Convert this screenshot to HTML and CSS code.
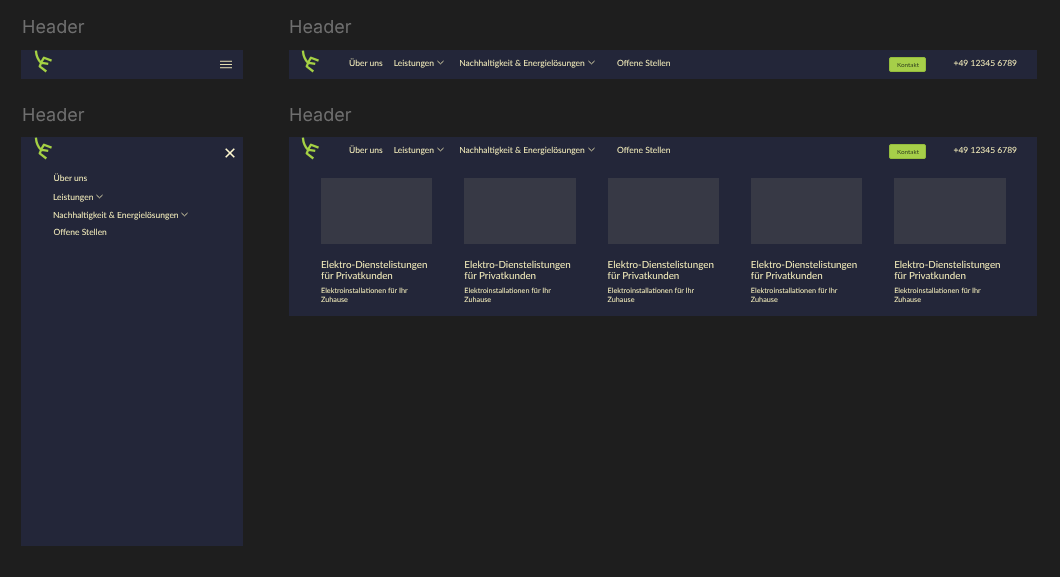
FILE: index.html
```html
<!DOCTYPE html>
<html lang="de">
<head>
    <meta charset="UTF-8">
    <title>Header</title>
    <meta name="viewport" content="width=device-width, initial-scale=1">
    <link rel="stylesheet" href="styles.css">
</head>
<body>
    <div class="canvas">
        <!-- mobil, geschlossen -->
        <section class="variant">
            <h2 class="variant-label">Header</h2>
            <div class="frame bar bar-mobile">
                <svg class="logo" viewBox="0 0 20 24"><path d="M2 0 Q2.5 8 7.5 13 M18.5 10.5 L10.5 7.5 Q7.5 12 6 16.5 L13 22 M15 14 L8.5 13" /></svg>
                <svg class="burger" viewBox="0 0 13 9"><path d="M0 1H13M0 4.5H13M0 8H13" /></svg>
            </div>
        </section>

        <!-- desktop, geschlossen -->
        <section class="variant variant-wide">
            <h2 class="variant-label">Header</h2>
            <div class="frame bar bar-desktop">
                <svg class="logo" viewBox="0 0 20 24"><path d="M2 0 Q2.5 8 7.5 13 M18.5 10.5 L10.5 7.5 Q7.5 12 6 16.5 L13 22 M15 14 L8.5 13" /></svg>
                <nav class="nav">
                    <a class="nav-link nav-about">Über uns</a>
                    <a class="nav-link nav-services">Leistungen <svg class="chevron" viewBox="0 0 8 5"><path d="M.5 .8 L4 4 L7.5 .8" /></svg></a>
                    <a class="nav-link nav-green">Nachhaltigkeit &amp; Energielösungen <svg class="chevron" viewBox="0 0 8 5"><path d="M.5 .8 L4 4 L7.5 .8" /></svg></a>
                    <a class="nav-link nav-jobs">Offene Stellen</a>
                </nav>
                <button class="contact">Kontakt</button>
                <span class="phone">+49 12345 6789</span>
            </div>
        </section>

        <!-- mobil, offen -->
        <section class="variant variant-low">
            <h2 class="variant-label">Header</h2>
            <div class="frame mobile-open">
                <div class="bar bar-mobile">
                    <svg class="logo" viewBox="0 0 20 24"><path d="M2 0 Q2.5 8 7.5 13 M18.5 10.5 L10.5 7.5 Q7.5 12 6 16.5 L13 22 M15 14 L8.5 13" /></svg>
                    <svg class="close" viewBox="0 0 10 10"><path d="M.7 .7 L9.3 9.3 M9.3 .7 L.7 9.3" /></svg>
                </div>
                <ul class="mobile-menu">
                    <li class="mobile-item">Über uns</li>
                    <li class="mobile-item mobile-sub">Leistungen <svg class="chevron" viewBox="0 0 8 5"><path d="M.5 .8 L4 4 L7.5 .8" /></svg></li>
                    <li class="mobile-item mobile-sub">Nachhaltigkeit &amp; Energielösungen <svg class="chevron" viewBox="0 0 8 5"><path d="M.5 .8 L4 4 L7.5 .8" /></svg></li>
                    <li class="mobile-item">Offene Stellen</li>
                </ul>
            </div>
        </section>

        <!-- desktop, offen -->
        <section class="variant variant-low variant-wide">
            <h2 class="variant-label">Header</h2>
            <div class="frame desktop-open">
                <div class="bar bar-desktop">
                    <svg class="logo" viewBox="0 0 20 24"><path d="M2 0 Q2.5 8 7.5 13 M18.5 10.5 L10.5 7.5 Q7.5 12 6 16.5 L13 22 M15 14 L8.5 13" /></svg>
                    <nav class="nav">
                        <a class="nav-link nav-about">Über uns</a>
                        <a class="nav-link nav-services">Leistungen <svg class="chevron" viewBox="0 0 8 5"><path d="M.5 .8 L4 4 L7.5 .8" /></svg></a>
                        <a class="nav-link nav-green">Nachhaltigkeit &amp; Energielösungen <svg class="chevron" viewBox="0 0 8 5"><path d="M.5 .8 L4 4 L7.5 .8" /></svg></a>
                        <a class="nav-link nav-jobs">Offene Stellen</a>
                    </nav>
                    <button class="contact">Kontakt</button>
                    <span class="phone">+49 12345 6789</span>
                </div>
                <div class="cards">
                    <article class="card">
                        <div class="card-image"></div>
                        <h3 class="card-title">Elektro-Dienstelistungen<br>für Privatkunden</h3>
                        <p class="card-text">Elektroinstallationen für Ihr Zuhause</p>
                    </article>
                    <article class="card">
                        <div class="card-image"></div>
                        <h3 class="card-title">Elektro-Dienstelistungen<br>für Privatkunden</h3>
                        <p class="card-text">Elektroinstallationen für Ihr Zuhause</p>
                    </article>
                    <article class="card">
                        <div class="card-image"></div>
                        <h3 class="card-title">Elektro-Dienstelistungen<br>für Privatkunden</h3>
                        <p class="card-text">Elektroinstallationen für Ihr Zuhause</p>
                    </article>
                    <article class="card">
                        <div class="card-image"></div>
                        <h3 class="card-title">Elektro-Dienstelistungen<br>für Privatkunden</h3>
                        <p class="card-text">Elektroinstallationen für Ihr Zuhause</p>
                    </article>
                    <article class="card">
                        <div class="card-image"></div>
                        <h3 class="card-title">Elektro-Dienstelistungen<br>für Privatkunden</h3>
                        <p class="card-text">Elektroinstallationen für Ihr Zuhause</p>
                    </article>
                </div>
            </div>
        </section>
    </div>
</body>
</html>
```

FILE: styles.css
```css
html, body { margin: 0; height: 100%; background: #1e1e1e; overflow: hidden; }
body { font-family: Lato, "Liberation Sans", sans-serif; color: #f6efbd; text-rendering: geometricPrecision; }
.canvas { display: grid; grid-template-columns: 222px 748px; grid-template-rows: 88px auto; column-gap: 46px; padding: 17px 0 0 21px; align-items: start; will-change: transform; }

.variant-label { margin: 0 0 11px; padding-left: 1px; font: 400 18px/22px Inter, sans-serif; color: #6f6f6f; }
.variant-wide .variant-label { padding-left: 0; }
.variant-low .variant-label { margin-bottom: 10px; }
.frame { background: #232639; overflow: hidden; }

.bar { display: flex; align-items: center; height: 29px; }
.bar-mobile { padding: 0 11px 0 13px; justify-content: space-between; }
.bar-desktop { padding: 0 20px 0 12px; }
.logo { width: 19px; height: 24px; margin-bottom: 5px; fill: none; stroke: #a5d144; stroke-width: 2.4; stroke-linejoin: round; flex: none; }
.burger { width: 12px; height: 9px; stroke: #f6efbd; stroke-width: 1; fill: none; }
.close { width: 10px; height: 10px; margin-right: -3px; stroke: #fff8d0; stroke-width: 1.6; fill: none; }
.mobile-open .bar-mobile { height: 32px; }
.mobile-open .logo { margin-bottom: 8px; }
.chevron { width: 7px; height: 5px; margin: 0 .5px; vertical-align: 1px; stroke: #f6efbd; stroke-width: 1; fill: none; }

.nav { display: flex; margin: 0 0 4px 29px; }
.nav-link { font-size: 8.5px; line-height: 12px; white-space: nowrap; }
.nav-services { margin-left: 11px; }
.nav-green { margin-left: 15px; }
.nav-jobs { margin-left: 22px; }
.contact { margin-left: auto; width: 37px; height: 15px; padding: 0; background: #a6cf49; border: 1px solid #94bc3d; border-radius: 2px; font: 400 6.4px Lato, sans-serif; color: #34441f; }
.phone { margin: 0 0 4px 27px; font-size: 8.5px; white-space: nowrap; }

.mobile-open { height: 409px; }
.mobile-menu { list-style: none; margin: 0; padding: 0 0 0 32px; }
.mobile-item { font-size: 8.5px; line-height: 12px; margin-bottom: 6px; padding-left: .5px; }
.mobile-item:first-child { margin: 3px 0 7px; }
.mobile-sub { padding-left: 0; }
.mobile-sub + .mobile-sub { margin-bottom: 5px; }

.desktop-open { height: 179px; }
.cards { display: grid; grid-template-columns: repeat(5, 111.4px); column-gap: 31.9px; padding: 12px 0 0 32px; }
.card-image { height: 66px; background: #373945; }
.card-title { margin: 15.5px 0 4.5px; font-size: 9.8px; line-height: 11.5px; font-weight: 400; white-space: nowrap; }
.card-text { margin: 0; font-size: 7.25px; line-height: 8.5px; width: 100px; }
```
